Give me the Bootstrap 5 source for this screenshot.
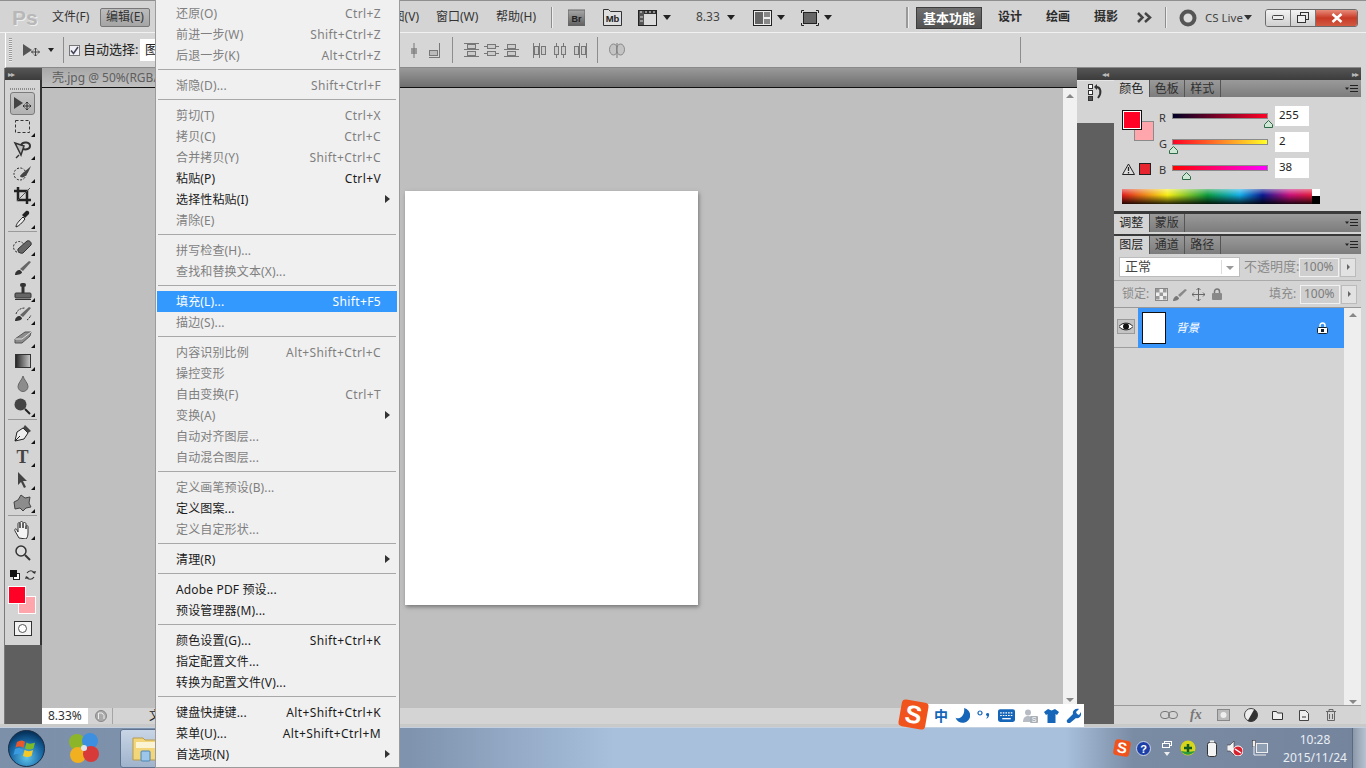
<!DOCTYPE html>
<html lang="zh-CN">
<head>
<meta charset="utf-8">
<title>Photoshop CS5</title>
<link rel="stylesheet" href="https://cdn.jsdelivr.net/npm/bootstrap@5.3.0/dist/css/bootstrap.min.css">
<script src="https://cdn.jsdelivr.net/npm/bootstrap@5.3.0/dist/js/bootstrap.bundle.min.js"></script>
<style>
html,body{margin:0;height:768px;width:1366px;overflow:hidden}
body{font:12px/1.2 "Noto Sans","Noto Sans CJK SC",sans-serif;color:#222;background:#c9c9c9;position:relative}
svg{display:block;flex:none}
.tri-d{width:0;height:0;border:4px solid transparent;border-top:5px solid #222;border-bottom:0;flex:none}
.ps-win{height:727px;display:flex;flex-direction:column;background:#d6d6d6}
/* menu bar */
.ps-menubar{height:33px;flex:none;display:flex;align-items:center;background:#d4d4d4;border-top:1px solid #8f8f8f;border-bottom:1px solid #f1f1f1;padding:2px 0 0 12px;white-space:nowrap;color:#333}
.ps-logo{width:23px;font:bold 21px "Liberation Sans",sans-serif;color:#b8b8b8;margin-right:17px;text-shadow:1px 1px 0 #eee}
.ps-mi{width:40px;flex:none}
.ps-mi-on{width:50px;margin-left:8px;height:19px;background:linear-gradient(#bcbcbc,#a5a5a5);border:1px solid #777;border-radius:2px;display:flex;align-items:center;justify-content:center;flex:none}
.ps-mi-hide{width:269px;display:flex;justify-content:flex-end;flex:none}
.ps-mi-win{width:43px;margin-left:17px;flex:none}
.ps-mi-help{width:41px;margin-left:17px;flex:none}
.ps-vsep{width:1px;background:#8d8d8d;border-right:1px solid #eee;box-sizing:content-box;height:21px;flex:none}
.ps-mright{margin-left:auto;display:flex;align-items:center;height:100%}
.ps-ws{width:66px;height:22px;background:linear-gradient(#6f6f6f,#525252);border:1px solid #3d3d3d;color:#fff;font-weight:700;text-align:center;line-height:20px;font-size:13px}
.ps-wsi{width:24px;font-weight:700;font-size:12px;color:#2b2b2b;flex:none}
.ps-winbtns{display:flex;height:18px;width:93px;border:1px solid #6b6b6b;border-radius:3px;overflow:hidden;margin-left:13px;margin-right:8px}
.ps-wb{width:26px;flex:1 1 auto;display:flex;align-items:center;justify-content:center;background:linear-gradient(#f3f3f3,#cfcfcf);border-right:1px solid #777}
.ps-wb-x{width:41px;flex:none;background:linear-gradient(#e88b7a,#c83a26 50%,#d25a42);border-right:0;color:#fff;font-weight:700}
/* options */
.ps-opts{height:35px;flex:none;margin-left:5px;margin-right:5px;display:flex;align-items:center;background:#d6d6d6;border-bottom:1px solid #8a8a8a;border-left:1px solid #fff;white-space:nowrap;position:relative}
.ps-grip{width:3px;height:24px;margin-left:3px;background:repeating-linear-gradient(#9a9a9a 0 1px,#ececec 1px 2px);flex:none}
.ps-sel{width:60px;height:22px;background:#fff;margin-left:5px;padding:3px 5px;font-size:13px;flex:none}
.ps-ck{width:11px;height:11px;border:1px solid #777;background:#eef0f6;margin-left:5px;display:flex;align-items:center;justify-content:center;flex:none}
.ps-osep{width:1px;height:26px;background:#8d8d8d;flex:none}
/* workspace */
.ps-work{flex:1 1 auto;display:flex;min-height:0;margin-left:4px;margin-right:5px;border-left:1px solid #7a7a7a;background:#5f5f5f}
.ps-toolcol{width:37px;flex:none;display:flex;flex-direction:column;background:#5f5f5f}
.ps-dkhead{height:12px;flex:none;background:linear-gradient(#555,#3c3c3c);color:#bbb;font-size:8px;line-height:11px;padding-left:3px;letter-spacing:-1px}
.ps-tools{background:#d4d4d4;border-right:2px solid #333;height:565px;display:flex;flex-direction:column;align-items:center}
.ps-tgrip{height:12px;flex:none;width:25px;background:repeating-linear-gradient(90deg,#8d8d8d 0 1px,transparent 1px 2px) center 8px/100% 2px no-repeat}
.ps-t{height:23px;width:25px;flex:none;display:flex;align-items:center;justify-content:center;position:relative}
.ps-t.sub::after{content:"";position:absolute;right:0;bottom:1px;border:2px solid transparent;border-right-color:#111;border-bottom-color:#111}
.ps-t-on{background:linear-gradient(#c4c4c4,#b2b2b2);border:1px solid #7b7b7b;border-radius:3px}
.ps-tsep{height:4px;width:29px;flex:none;position:relative}
.ps-tsep::after{content:"";display:block;height:1px;background:#9a9a9a;margin-top:1px}
.ps-swstack{width:28px;height:28px;position:relative;margin:3px 0 7px -2px;flex:none}
.ps-swfg,.ps-swbg{position:absolute;width:18px;height:18px;border:1px solid #fff}
.ps-swfg{left:0;top:0;background:#ff0226;z-index:1}
.ps-swbg{left:10px;top:10px;background:#ffa6ac}
.ps-qm{width:18px;height:15px;border:1px solid #333;background:#f3f3f3;display:flex;align-items:center;justify-content:center;flex:none}
.ps-qm i{width:9px;height:9px;border-radius:50%;border:1px solid #555;background:#fff;display:block}
/* center */
.ps-center{flex:1 1 auto;display:flex;flex-direction:column;min-width:0}
.ps-tabbar{height:20px;flex:none;background:linear-gradient(#9a9a9a,#6e6e6e);border-bottom:1px solid #111;position:relative}
.ps-tab{width:113px;height:19px;background:linear-gradient(#a9a9a9,#c0c0c0);padding:3px 0 0 10px;color:#5e5e5e;white-space:nowrap}
.ps-canvasrow{flex:1 1 auto;display:flex;min-height:0}
.ps-canvas{flex:1 1 auto;background:#bfbfbf;padding:103px 0 0 363px}
.ps-page{width:293px;height:414px;background:#fff;box-shadow:1px 2px 4px #777}
.ps-vs{width:14px;flex:none;background:#f1f1f1;display:flex;flex-direction:column;justify-content:space-between;align-items:center;padding:6px 0}
.ps-tu{width:0;height:0;border:4px solid transparent;border-bottom:4px solid #888;border-top:0}
.ps-td{width:0;height:0;border:4px solid transparent;border-top:4px solid #888;border-bottom:0}
.ps-status{height:16px;flex:none;background:#d4d4d4;display:flex;align-items:center;white-space:nowrap}
.ps-zoombox{width:46px;height:100%;background:#fff;padding-left:6px;color:#333;line-height:16px}
.ps-doctxt{margin-left:5px;border-left:1px solid #a5a5a5;height:100%;padding-left:36px;line-height:16px;color:#222}
/* dock */
.ps-dock{width:284px;flex:none;display:flex;flex-direction:column;background:#5f5f5f}
.ps-dockhead{height:12px;flex:none;background:linear-gradient(#555,#3c3c3c);color:#bbb;font-size:8px;line-height:11px;display:flex;justify-content:space-between;padding:0 3px 0 25px;letter-spacing:-1px}
.ps-dockbody{flex:1 1 auto;display:flex;min-height:0}
.ps-iconic{width:37px;flex:none}
.ps-histbtn{height:43px;background:#d4d4d4;display:flex;justify-content:center;padding-top:3px;border-top:1px solid #e6e6e6;position:relative}
.ps-panels{flex:1 1 auto;display:flex;flex-direction:column;min-width:0;background:#3a3a3a}
.ps-ptabs{display:flex;height:18px;flex:none;background:linear-gradient(#9a9a9a,#7c7c7c);align-items:stretch;position:relative}
.ps-ptab{width:35.5px;text-align:center;line-height:17px;color:#2f2f2f;border-right:1px solid #555;flex:none}
.ps-ptab-on{background:#d4d4d4;color:#222;border-right:1px solid #555}
.ps-pmenu{margin-left:auto;margin-right:3px;align-self:center}
.ps-pcolor{height:114px;flex:none;background:#d4d4d4;padding:9px 0 0 8px;margin-bottom:3px}
.ps-clcol{width:37px;height:72px;display:flex;flex-direction:column;justify-content:space-between;flex:none}
.ps-cl-stack{position:relative;height:34px;margin-top:4px}
.ps-cl-fg,.ps-cl-bg{position:absolute;width:20px;height:20px}
.ps-cl-fg{left:0;top:0;background:#ff0226;border:1px solid #111;outline:1px solid #fff;outline-offset:-2px;z-index:1}
.ps-cl-bg{left:12px;top:11px;background:#ffa6ac;border:1px solid #8a8a8a}
.ps-warn{display:flex;align-items:center;gap:4px;margin-bottom:3px}
.ps-gam{width:12px;height:12px;background:#e6252f;border:1px solid #222}
.ps-crow{height:26px;display:flex;align-items:flex-start}
.ps-clab{width:13px;padding-top:5px;color:#333;font-size:11px;flex:none}
.ps-slw{width:96px;position:relative;flex:none;margin-top:7px}
.ps-sl{height:6px;border:1px solid #8b8b8b}
.ps-sl-r{background:linear-gradient(90deg,#000226,#ff0226)}
.ps-sl-g{background:linear-gradient(90deg,#ff0026,#ffff26)}
.ps-sl-b{background:linear-gradient(90deg,#ff0200,#ff02ff)}
.ps-thumb{position:absolute;top:7px;width:9px;height:8px;margin-left:-4px}
.ps-val{width:34px;height:20px;background:#fff;margin-left:7px;padding:0 0 0 4px;line-height:17px;font-size:11.5px;color:#222;flex:none}
.ps-spec{width:198px;height:15px;margin-top:5px;display:flex;border:0}
.ps-spec-c{flex:1 1 auto;background:linear-gradient(rgba(255,255,255,.45),rgba(255,255,255,0) 40%,rgba(0,0,0,.85)),linear-gradient(90deg,#e01c1c,#f7ee12 24%,#0d9b3f 45%,#12aee8 62%,#0b1a90 74%,#c8107c 88%,#e01c3a)}
.ps-spec-e{width:8px;flex:none;background:linear-gradient(#fff 50%,#000 50%)}
.ps-strip{height:2px;background:#d4d4d4;flex:none}
.ps-player{flex:1 1 auto;display:flex;flex-direction:column;background:#d4d4d4;min-height:0}
.ps-lr1{height:27px;flex:none;display:flex;align-items:center;border-bottom:1px solid #aaa;padding-left:5px;color:#8a8a8a;white-space:nowrap}
.ps-lr2{height:27px;flex:none;display:flex;align-items:center;border-bottom:1px solid #999;padding-left:8px;color:#8a8a8a;white-space:nowrap}
.ps-blend{width:121px;height:20px;background:#fff;border:1px solid #bcbcbc;display:flex;align-items:center;padding-left:5px;color:#444;font-size:13px;position:relative;flex:none}
.ps-blend::before{content:"";position:absolute;right:17px;top:2px;bottom:2px;width:1px;background:#ddd}
.ps-blend b{position:absolute;right:5px;top:8px;border:4px solid transparent;border-top:4px solid #999;border-bottom:0}
.ps-op{width:40px;height:19px;background:#cfcfcf;border:1px solid #f1f1f1;color:#7c7c7c;padding-left:3px;line-height:16px;margin-left:3px;flex:none}
.ps-oparrow{width:16px;height:19px;background:#e2e2e2;border:1px solid #bbb;margin-left:1px;display:flex;align-items:center;justify-content:center;flex:none}
.ps-oparrow i{border:3px solid transparent;border-left:3px solid #666;border-right:0;display:block}
.ps-lmid{flex:1 1 auto;display:flex;min-height:0}
.ps-llist{flex:1 1 auto;min-width:0}
.ps-lrow{height:40px;display:flex;border-bottom:0}
.ps-eye{width:24px;flex:none;display:flex;align-items:center;justify-content:center;border-bottom:1px solid #9e9e9e;position:relative;padding-bottom:2px}
.ps-eyebox{width:18px;height:15px;background:#c4c4c4;border:1px solid #9a9a9a;display:flex;align-items:center;justify-content:center}
.ps-lsel{flex:1 1 auto;background:#3a95fb;display:flex;align-items:center;padding-left:4px;color:#fff}
.ps-lthumb{width:24px;height:32px;background:#fff;border:1px solid #111;flex:none}
.ps-lname{margin-left:10px;font-style:italic;font-size:11.5px}
.ps-lvs{width:17px;flex:none;background:#eee;display:flex;flex-direction:column;justify-content:space-between;align-items:center;padding:5px 0 1px}
.ps-lbot{height:19px;flex:none;border-top:1px solid #999;display:flex;align-items:center;background:#d4d4d4;padding-left:46px}
.ps-lbot>*{flex:none}
/* taskbar */
.ps-taskbar{height:41px;display:flex;align-items:center;background:linear-gradient(90deg,#7d90aa 0,#7f93ae 30%,#a8c0dc 45%,#a8c0dc 78%,#7a8ba4 83%,#74849c 100%);border-top:1px solid #c2d0e0;position:relative}
.ps-appbtn{width:60px;height:39px;margin-left:20px;background:linear-gradient(#c8d5e6,#9fb3cc);border:1px solid #5f7390;border-radius:3px;display:flex;align-items:center;padding-left:10px;flex:none}
.ps-tray{margin-left:auto;display:flex;align-items:center;height:100%}
.ps-clock{width:70px;color:#e9eef5;text-align:center;font-size:12px;line-height:18px;margin-left:12px;padding-top:1px}
.ps-showd{width:14px;height:100%;margin-left:2px;background:linear-gradient(90deg,#8b98aa,#b8c2d0);border-left:1px solid #5c6a80}
/* edit menu */
.ps-menu{position:absolute;left:155px;top:0;width:245px;height:768px;background:#f0f0f0;border:1px solid #9b9b9b;border-top:0;padding:2.5px 2px 0 1px;z-index:20;white-space:nowrap;letter-spacing:.15px}
.ps-mit{height:21px;display:flex;align-items:center;justify-content:space-between;padding:2px 16px 0 19px;color:#7f7f7f;position:relative}
.ps-mit>span+span{letter-spacing:.38px}
.ps-mit.en{color:#1b1b1b}
.ps-mit.cur{background:#3399ff;color:#fff}
.ps-mit.arr::after{content:"";position:absolute;right:7px;top:6px;border:4px solid transparent;border-left:5px solid #333;border-right:0}
.ps-msep{height:9px;display:flex;align-items:center;padding:0 1px}
.ps-msep::before{content:"";flex:1;height:1px;background:#a8a8a8;display:block;margin-top:-1px}
/* sogou */
.ps-sogou{position:absolute;left:905px;top:704px;width:179px;height:23px;background:#fff;z-index:10;display:flex;align-items:center;padding-left:29px;gap:7px;color:#1565b8}
.ps-slogo{position:absolute;left:-5px;top:-3px;width:27px;height:27px;background:#f0541c;border-radius:4px;transform:rotate(10deg);color:#fff;font:900 25px/26px "Liberation Sans",sans-serif;text-align:center}
.ps-szh{font-weight:700;font-size:14px;color:#1565b8;width:14px;line-height:14px}
.ps-trs{width:16px;height:16px;background:#f0541c;border-radius:3px;transform:rotate(10deg);color:#fff;font:900 15px/16px "Liberation Sans",sans-serif;text-align:center;flex:none}
</style>
</head>
<body>
<div class="ps-win">
  <div class="ps-menubar">
    <div class="ps-logo">Ps</div>
    <div class="ps-mi">文件(F)</div>
    <div class="ps-mi-on">编辑(E)</div>
    <div class="ps-mi-hide"><span>视图(V)</span></div>
    <div class="ps-mi-win">窗口(W)</div>
    <div class="ps-mi-help">帮助(H)</div>
    <div class="ps-vsep" style="margin-left:14px"></div>
    <svg style="margin-left:15px" width="17" height="17" viewBox="0 0 17 17"><defs><linearGradient id="g1" x1="0" y1="0" x2="0" y2="1"><stop offset="0" stop-color="#a8a8a8"/><stop offset="1" stop-color="#5e5e5e"/></linearGradient></defs><rect width="17" height="16" y="1" fill="url(#g1)" stroke="#666"/><text x="8.5" y="12.5" text-anchor="middle" font-size="9" font-weight="700" font-family="Liberation Sans" fill="#222">Br</text></svg>
    <svg style="margin-left:18px" width="19" height="17" viewBox="0 0 19 17"><path d="M.5 16.5V.5h5l2 2h11v14z" fill="#dedede" stroke="#333"/><text x="9.5" y="13" text-anchor="middle" font-size="9.5" font-weight="700" font-family="Liberation Sans" fill="#222">Mb</text></svg>
    <svg style="margin-left:16px" width="19" height="16" viewBox="0 0 19 16"><rect x=".5" y=".5" width="18" height="15" fill="#dcdcdc" stroke="#222"/><rect x="1" y="1" width="17" height="3" fill="#333"/><rect x="1" y="1" width="5" height="14" fill="#555"/><path d="M2 2h2M7 2h2M11 2h2M15 2h2" stroke="#eee"/><path d="M2 7h3M2 11h3" stroke="#ddd"/></svg>
    <div class="tri-d" style="margin-left:6px"></div>
    <span style="margin-left:25px;color:#444;width:21px">8.33</span>
    <div class="tri-d" style="margin-left:10px"></div>
    <svg style="margin-left:18px" width="19" height="16" viewBox="0 0 19 16"><rect x=".5" y=".5" width="18" height="15" fill="#eee" stroke="#222"/><rect x="2" y="2" width="8" height="12" fill="#666"/><rect x="11" y="2" width="6" height="5" fill="#888"/><rect x="11" y="9" width="6" height="5" fill="#888"/></svg>
    <div class="tri-d" style="margin-left:5px"></div>
    <svg style="margin-left:16px" width="18" height="16" viewBox="0 0 18 16"><rect x="2.5" y="2.5" width="13" height="11" fill="#666" stroke="#222"/><path d="M.5 3V.5H3M15 .5h2.500V3M.5 13v2.500H3M15 15.500h2.500V13" fill="none" stroke="#222"/></svg>
    <div class="tri-d" style="margin-left:5px"></div>
    <div class="ps-mright">
      <div class="ps-vsep" style="width:2px;background:#999;margin-right:7px"></div>
      <div class="ps-ws">基本功能</div>
      <div class="ps-wsi" style="margin-left:16px">设计</div>
      <div class="ps-wsi" style="margin-left:24px">绘画</div>
      <div class="ps-wsi" style="margin-left:24px">摄影</div>
      <svg style="margin-left:19px" width="15" height="11" viewBox="0 0 15 11"><path d="M1 1l4.500 4.500L1 10M8 1l5 4.500L8 10" fill="none" stroke="#444" stroke-width="2.500"/></svg>
      <div class="ps-vsep" style="margin-left:13px"></div>
      <svg style="margin-left:12px" width="18" height="18" viewBox="0 0 18 18"><circle cx="9" cy="9" r="6.500" fill="#dcdcdc" stroke="#555" stroke-width="4"/></svg>
      <span class="ms-2" style="color:#444;width:37px;font-size:11.5px">CS Live</span>
      <div class="tri-d" style="border-top-color:#333;margin-left:2px"></div>
      <div class="ps-winbtns">
        <div class="ps-wb"><svg width="12" height="6" viewBox="0 0 12 6"><rect x=".5" y=".5" width="11" height="4" rx="1" fill="#eee" stroke="#444"/></svg></div>
        <div class="ps-wb"><svg width="12" height="11" viewBox="0 0 12 11"><rect x="3.500" y=".5" width="8" height="7" fill="none" stroke="#333"/><rect x=".5" y="3.500" width="8" height="7" fill="#eee" stroke="#333"/></svg></div>
        <div class="ps-wb ps-wb-x"><svg width="12" height="10" viewBox="0 0 12 10"><path d="M1.500 1l9 8M10.500 1l-9 8" stroke="#fff" stroke-width="2.500"/></svg></div>
      </div>
    </div>
  </div>

  <div class="ps-opts">
    <div class="ps-grip"></div>
    <svg style="margin-left:10px" width="18" height="13" viewBox="0 0 18 13"><path d="M1 0l9 6-9 6z" fill="#555"/><path d="M13.500 4v8M9.500 8h8M12 5.500l1.500-1.500 1.500 1.500M12 10.500l1.500 1.500 1.500-1.500M11 6.500L9.500 8l1.500 1.500M16 6.500L17.500 8 16 9.500" fill="none" stroke="#444"/></svg>
    <div class="tri-d ms-2" style="border-width:3px;border-top-width:4px"></div>
    <div class="ps-osep" style="margin-left:9px"></div>
    <div class="ps-ck"><svg width="9" height="9" viewBox="0 0 9 9"><path d="M1 4.500l2.500 3L8 1" fill="none" stroke="#445" stroke-width="1.500"/></svg></div>
    <span style="margin-left:3px;font-size:13px;width:52px">自动选择:</span>
    <div class="ps-sel">图层</div>
    <div style="width:209px;flex:none"></div>
    <svg width="11" height="15" viewBox="0 0 11 15"><rect x="2" y="5" width="6" height="6" fill="#999"/><path d="M5 0v15" stroke="#777"/></svg>
    <svg style="margin-left:9px" width="12" height="15" viewBox="0 0 12 15"><rect x=".5" y="7.500" width="8" height="5" fill="#bbb" stroke="#777"/><path d="M10.500 0v15M0 14.500h11" stroke="#777"/></svg>
    <div class="ps-osep" style="margin-left:11px"></div>
    <svg style="margin-left:11px" width="15" height="14" viewBox="0 0 15 14"><path d="M0 .5h15M0 6.500h15M0 13.500h15" stroke="#777"/><rect x="3.500" y="1.500" width="8" height="4" fill="#ccc" stroke="#777"/><rect x="3.500" y="8.500" width="8" height="4" fill="#ccc" stroke="#777"/></svg>
    <svg style="margin-left:5px" width="15" height="14" viewBox="0 0 15 14"><path d="M0 3.500h15M0 10.500h15" stroke="#777"/><rect x="3.500" y="1.500" width="8" height="4" fill="#ccc" stroke="#777"/><rect x="3.500" y="8.500" width="8" height="4" fill="#ccc" stroke="#777"/></svg>
    <svg style="margin-left:5px" width="15" height="14" viewBox="0 0 15 14"><path d="M0 6.500h15M0 13.500h15" stroke="#777"/><rect x="3.500" y="1.500" width="8" height="4" fill="#ccc" stroke="#777"/><rect x="3.500" y="8.500" width="8" height="4" fill="#ccc" stroke="#777"/></svg>
    <svg style="margin-left:14px" width="14" height="15" viewBox="0 0 14 15"><path d="M.5 0v15M6.500 0v15" stroke="#777"/><rect x="1.500" y="3.500" width="4" height="8" fill="#ccc" stroke="#777"/><rect x="8.500" y="3.500" width="4" height="8" fill="#ccc" stroke="#777"/></svg>
    <svg style="margin-left:6px" width="14" height="15" viewBox="0 0 14 15"><path d="M3.500 0v15M10.500 0v15" stroke="#777"/><rect x="1.500" y="3.500" width="4" height="8" fill="#ccc" stroke="#777"/><rect x="8.500" y="3.500" width="4" height="8" fill="#ccc" stroke="#777"/></svg>
    <svg style="margin-left:6px" width="14" height="15" viewBox="0 0 14 15"><path d="M6.500 0v15M13.500 0v15" stroke="#777"/><rect x="1.500" y="3.500" width="4" height="8" fill="#ccc" stroke="#777"/><rect x="8.500" y="3.500" width="4" height="8" fill="#ccc" stroke="#777"/></svg>
    <div class="ps-osep" style="margin-left:10px"></div>
    <svg style="margin-left:11px" width="16" height="15" viewBox="0 0 16 15"><ellipse cx="4.500" cy="6.500" rx="4" ry="5.500" fill="#c4c4c4" stroke="#888"/><ellipse cx="11.500" cy="6.500" rx="4" ry="5.500" fill="#c4c4c4" stroke="#888"/><path d="M8 0v15" stroke="#777"/></svg>
    <div class="ps-osep" style="margin-left:395px"></div>
  </div>

  <div class="ps-work">
    <div class="ps-toolcol">
      <div class="ps-dkhead">▸▸</div>
      <div class="ps-tools">
        <div class="ps-tgrip"></div>
        <div class="ps-t ps-t-on"><svg width="19" height="14" viewBox="0 0 19 14"><path d="M1 0l9 6-9 6z" fill="#444"/><path d="M14 5v8M10 9h8M12.500 6.500L14 5l1.500 1.500M12.500 11.500L14 13l1.500-1.500M11.500 7.500L10 9l1.500 1.500M16.500 7.500L18 9l-1.500 1.500" fill="none" stroke="#333"/></svg></div>
        <div class="ps-t sub"><svg width="15" height="13" viewBox="0 0 15 13"><rect x=".5" y=".5" width="14" height="12" fill="none" stroke="#333" stroke-dasharray="3 2"/></svg></div>
        <div class="ps-t sub"><svg width="19" height="19" viewBox="0 0 19 19"><path d="M2 3l9 3-3 9z" fill="#bbb" stroke="#333" stroke-width="1.500"/><path d="M8 5c2-4 9-3 9 1 0 3-4 4-7 3" fill="none" stroke="#333" stroke-width="2"/><path d="M3 18l3-3" stroke="#333" stroke-width="1.500"/></svg></div>
        <div class="ps-t sub"><svg width="19" height="16" viewBox="0 0 19 16"><circle cx="7" cy="9" r="6" fill="none" stroke="#222" stroke-dasharray="2 1.500"/><path d="M7 11c2-3 6-5 11-10-2 5-4 9-7 11-2 1-4 0-4-1z" fill="#444"/></svg></div>
        <div class="ps-t sub"><svg width="17" height="17" viewBox="0 0 17 17"><path d="M4 0v13h13M0 4h13v13" fill="none" stroke="#222" stroke-width="2.500"/><path d="M3 14L16 1" stroke="#555"/></svg></div>
        <div class="ps-t sub"><svg width="15" height="18" viewBox="0 0 15 18"><path d="M1 17c0-3 3-6 7-10l2 2c-3 4-6 7-9 8z" fill="#eee" stroke="#222"/><path d="M7 5l3-3 1-1c2-1 4 1 3 3l-1 1-3 3z" fill="#222"/></svg></div>
        <div class="ps-tsep"></div>
        <div class="ps-t sub"><svg width="20" height="18" viewBox="0 0 20 18"><circle cx="6" cy="10" r="5.500" fill="none" stroke="#222" stroke-dasharray="2 1.500"/><path d="M5 12l9-8c2-1 5 1 4 4l-8 8c-2 1-6-1-5-4z" fill="#666" stroke="#333"/></svg></div>
        <div class="ps-t sub"><svg width="18" height="15" viewBox="0 0 18 15"><path d="M1 14c0-3 2-5 5-5l2 2c0 2-3 3-7 3z" fill="#333"/><path d="M6 8l9-8 2 1-8 9z" fill="#666"/></svg></div>
        <div class="ps-t sub"><svg width="18" height="17" viewBox="0 0 18 17"><rect x="6" y="0" width="6" height="4" rx="2" fill="#333"/><rect x="7.500" y="4" width="3" height="6" fill="#333"/><rect x="1" y="10" width="16" height="5" rx="1" fill="#666" stroke="#333"/><path d="M1 16.500h16" stroke="#333"/></svg></div>
        <div class="ps-t sub"><svg width="18" height="15" viewBox="0 0 18 15"><path d="M1 14c0-3 2-5 5-5l2 2c0 2-3 3-7 3z" fill="#333"/><path d="M6 8l9-8 2 1-8 9z" fill="#666"/><path d="M2 7C3 3 7 1 11 1M13 13c2-1 3-3 4-5" fill="none" stroke="#333" stroke-dasharray="2 1"/></svg></div>
        <div class="ps-t sub"><svg width="18" height="13" viewBox="0 0 18 13"><path d="M1 8l10-7h6l-1 4-8 7H1z" fill="#8c8c8c" stroke="#555"/><path d="M1 8h7l9-7" fill="none" stroke="#ddd"/></svg></div>
        <div class="ps-t sub"><svg width="16" height="14" viewBox="0 0 16 14"><defs><linearGradient id="g2"><stop offset="0" stop-color="#222"/><stop offset="1" stop-color="#ccc"/></linearGradient></defs><rect x=".5" y=".5" width="15" height="13" fill="url(#g2)" stroke="#333"/></svg></div>
        <div class="ps-t sub"><svg width="12" height="16" viewBox="0 0 12 16"><path d="M6 0C5 4 1 7 1 10.500a5 5 0 0 0 10 0C11 7 7 4 6 0z" fill="#8c8c8c" stroke="#666"/></svg></div>
        <div class="ps-t sub"><svg width="17" height="17" viewBox="0 0 17 17"><circle cx="6.500" cy="6.500" r="6" fill="#444"/><path d="M11 11l5 5" stroke="#222" stroke-width="2"/></svg></div>
        <div class="ps-tsep"></div>
        <div class="ps-t sub"><svg width="17" height="17" viewBox="0 0 17 17"><path d="M1 16l2-9 6-4 5 5-4 6z" fill="#eee" stroke="#222"/><path d="M9 3l2-3 6 6-3 2z" fill="#444"/><path d="M1 16l5-5" stroke="#222"/></svg></div>
        <div class="ps-t sub"><span style="font:700 18px/1 'Liberation Serif',serif;color:#444">T</span></div>
        <div class="ps-t sub"><svg width="11" height="16" viewBox="0 0 11 16"><path d="M1 0l9 9H6l3 6-2 1-3-6-3 3z" fill="#444"/></svg></div>
        <div class="ps-t sub"><svg width="19" height="17" viewBox="0 0 19 17"><path d="M1 8l4-2 3-5 4 3 5-1-1 6 2 4-5 1-3 3-3-3-5 1z" fill="#8c8c8c" stroke="#444"/></svg></div>
        <div class="ps-tsep"></div>
        <div class="ps-t sub"><svg width="18" height="18" viewBox="0 0 18 18"><path d="M5 17L1 10c-1-2 1-3 2-1l1 2V3c0-2 2-2 2 0v4-5c0-2 3-2 3 0v5-4c0-2 3-2 3 0v5-2c0-2 2-2 2 0v6c0 3-1 5-2 6z" fill="#f4f4f4" stroke="#333"/></svg></div>
        <div class="ps-t"><svg width="16" height="16" viewBox="0 0 16 16"><circle cx="6" cy="6" r="5" fill="#ddd" stroke="#333" stroke-width="1.500"/><path d="M10 10l5 5" stroke="#333" stroke-width="2"/></svg></div>
        <div class="d-flex align-items-center justify-content-between" style="width:26px;height:19px;flex:none;padding-top:3px">
          <svg width="10" height="10" viewBox="0 0 10 10"><rect x="3.500" y="3.500" width="6" height="6" fill="#fff" stroke="#222"/><rect width="7" height="7" fill="#111"/></svg>
          <svg width="11" height="10" viewBox="0 0 11 10"><path d="M2 3c2-3 6-3 7 0M9 7c-2 3-6 3-7 0" fill="none" stroke="#333" stroke-width="1.200"/><path d="M7 2l3 2 1-3zM4 8L1 6 0 9z" fill="#333"/></svg>
        </div>
        <div class="ps-swstack"><div class="ps-swfg"></div><div class="ps-swbg"></div></div>
        <div class="ps-qm"><i></i></div>
      </div>
    </div>

    <div class="ps-center">
      <div class="ps-tabbar"><div class="ps-tab">壳.jpg @ 50%(RGB/</div></div>
      <div class="ps-canvasrow">
        <div class="ps-canvas"><div class="ps-page"></div></div>
        <div class="ps-vs"><div class="ps-tu"></div><div class="ps-td"></div></div>
      </div>
      <div class="ps-status">
        <div class="ps-zoombox">8.33%</div>
        <svg style="margin-left:7px" width="12" height="12" viewBox="0 0 12 12"><circle cx="6" cy="6" r="5.500" fill="#aaa" stroke="#888"/><path d="M3.500 9V3H7l2 2.500V9" fill="none" stroke="#eee"/></svg>
        <div class="ps-doctxt">文</div>
      </div>
    </div>

    <div class="ps-dock">
      <div class="ps-dockhead"><span>◂◂</span><span>▸▸</span></div>
      <div class="ps-dockbody">
        <div class="ps-iconic">
          <div class="ps-histbtn"><svg width="16" height="18" viewBox="0 0 16 18"><rect x=".5" y=".5" width="4" height="4" fill="#fff" stroke="#333"/><rect x=".5" y="6.500" width="4" height="4" fill="#fff" stroke="#333"/><rect x=".5" y="12.500" width="4" height="4" fill="#555" stroke="#333"/><path d="M7 3c6-1 7 6 3 11" fill="none" stroke="#333" stroke-width="2"/><path d="M9 0L6 3l3 3z" fill="#333"/></svg></div>
        </div>
        <div class="ps-panels">
          <div class="ps-ptabs" style="height:17px">
            <div class="ps-ptab ps-ptab-on">颜色</div><div class="ps-ptab">色板</div><div class="ps-ptab">样式</div>
            <svg class="ps-pmenu" width="13" height="8" viewBox="0 0 13 8"><path d="M5 .5h8M5 3.500h8M5 6.500h8" stroke="#222"/><path d="M0 2.500h4L2 5z" fill="#222"/></svg>
          </div>
          <div class="ps-pcolor">
            <div class="d-flex">
              <div class="ps-clcol">
                <div class="ps-cl-stack"><div class="ps-cl-fg"></div><div class="ps-cl-bg"></div></div>
                <div class="ps-warn">
                  <svg width="13" height="12" viewBox="0 0 13 12"><path d="M6.500 1L12.500 11.500H.5z" fill="#ddd" stroke="#222"/><path d="M6.500 4v4M6.500 9v1.500" stroke="#222" stroke-width="1.300"/></svg>
                  <div class="ps-gam"></div>
                </div>
              </div>
              <div>
                <div class="ps-crow"><div class="ps-clab">R</div><div class="ps-slw"><div class="ps-sl ps-sl-r"></div><svg class="ps-thumb" style="left:96px" viewBox="0 0 9 8"><path d="M4.500.5l4 4v3h-8v-3z" fill="#cfe8d6" stroke="#2e6a48"/></svg></div><div class="ps-val">255</div></div>
                <div class="ps-crow"><div class="ps-clab">G</div><div class="ps-slw"><div class="ps-sl ps-sl-g"></div><svg class="ps-thumb" style="left:1px" viewBox="0 0 9 8"><path d="M4.500.5l4 4v3h-8v-3z" fill="#cfe8d6" stroke="#2e6a48"/></svg></div><div class="ps-val">2</div></div>
                <div class="ps-crow"><div class="ps-clab">B</div><div class="ps-slw"><div class="ps-sl ps-sl-b"></div><svg class="ps-thumb" style="left:14px" viewBox="0 0 9 8"><path d="M4.500.5l4 4v3h-8v-3z" fill="#cfe8d6" stroke="#2e6a48"/></svg></div><div class="ps-val">38</div></div>
              </div>
            </div>
            <div class="ps-spec"><div class="ps-spec-c"></div><div class="ps-spec-e"></div></div>
          </div>
          <div class="ps-ptabs">
            <div class="ps-ptab ps-ptab-on">调整</div><div class="ps-ptab">蒙版</div>
            <svg class="ps-pmenu" width="13" height="8" viewBox="0 0 13 8"><path d="M5 .5h8M5 3.500h8M5 6.500h8" stroke="#222"/><path d="M0 2.500h4L2 5z" fill="#222"/></svg>
          </div>
          <div class="ps-strip"></div>
          <div style="height:2px;flex:none"></div>
          <div class="ps-ptabs">
            <div class="ps-ptab ps-ptab-on">图层</div><div class="ps-ptab">通道</div><div class="ps-ptab">路径</div>
            <svg class="ps-pmenu" width="13" height="8" viewBox="0 0 13 8"><path d="M5 .5h8M5 3.500h8M5 6.500h8" stroke="#222"/><path d="M0 2.500h4L2 5z" fill="#222"/></svg>
          </div>
          <div class="ps-player">
            <div class="ps-lr1">
              <div class="ps-blend">正常<b></b></div>
              <span style="margin-left:4px;width:52px;font-size:13px;flex:none">不透明度:</span>
              <div class="ps-op">100%</div>
              <div class="ps-oparrow"><i></i></div>
            </div>
            <div class="ps-lr2">
              <span style="width:26px;flex:none;margin-right:7px">锁定:</span>
              <svg width="13" height="13" viewBox="0 0 13 13"><rect x=".5" y=".5" width="12" height="12" fill="#eee" stroke="#888"/><path d="M1 1h3.500v3.500H1zM8 1h3.500v3.500H8zM4.500 4.500H8V8H4.500zM1 8h3.500v3.500H1zM8 8h3.500v3.500H8z" fill="#999"/></svg>
              <svg style="margin-left:5px" width="14" height="13" viewBox="0 0 14 13"><path d="M0 13c0-3 2-5 4-5l2 2c0 2-3 3-6 3z" fill="#777"/><path d="M5 7l7-6 2 1-7 7z" fill="#888"/></svg>
              <svg style="margin-left:5px" width="13" height="13" viewBox="0 0 13 13"><path d="M6.500 0v13M0 6.500h13M4.500 2l2-2 2 2M4.500 11l2 2 2-2M2 4.500l-2 2 2 2M11 4.500l2 2-2 2" fill="none" stroke="#666"/></svg>
              <svg style="margin-left:7px" width="10" height="12" viewBox="0 0 10 12"><path d="M2.500 5V3.500a2.500 2.500 0 0 1 5 0V5" fill="none" stroke="#777" stroke-width="1.500"/><rect y="5" width="10" height="7" rx="1" fill="#888"/></svg>
              <span style="margin-left:47px;width:27px;flex:none">填充:</span>
              <div class="ps-op" style="margin-left:4px">100%</div>
              <div class="ps-oparrow"><i></i></div>
            </div>
            <div class="ps-lmid">
              <div class="ps-llist">
                <div class="ps-lrow">
                  <div class="ps-eye"><div class="ps-eyebox"><svg width="14" height="9" viewBox="0 0 14 9"><path d="M0 4.500C3 0 11 0 14 4.500 11 9 3 9 0 4.500z" fill="#fff" stroke="#222"/><circle cx="7" cy="4.500" r="3" fill="#111"/></svg></div></div>
                  <div class="ps-lsel">
                    <div class="ps-lthumb"></div>
                    <span class="ps-lname">背景</span>
                    <svg class="ms-auto" style="margin-right:16px" width="11" height="12" viewBox="0 0 11 12"><path d="M3 6V3.500a2.500 2.500 0 0 1 5 0V6" fill="none" stroke="#fff" stroke-width="1.500"/><rect x=".5" y="5.500" width="10" height="6" rx="1" fill="#fff" stroke="#123"/><rect x="4" y="7" width="3" height="3" fill="#123"/></svg>
                  </div>
                </div>
              </div>
              <div class="ps-lvs"><div class="ps-tu"></div><div class="ps-td"></div></div>
            </div>
            <div class="ps-lbot">
              <svg width="18" height="8" viewBox="0 0 18 8"><rect x=".5" y=".5" width="9" height="7" rx="3.500" fill="none" stroke="#777"/><rect x="8.500" y=".5" width="9" height="7" rx="3.500" fill="none" stroke="#777"/></svg>
              <span style="margin-left:12px;width:15px;font:italic 700 14px 'Liberation Serif',serif;color:#777">fx</span>
              <svg style="margin-left:12px" width="13" height="12" viewBox="0 0 13 12"><rect x=".5" y=".5" width="12" height="11" fill="#bbb" stroke="#888"/><circle cx="6.500" cy="6" r="3" fill="#eee"/></svg>
              <svg style="margin-left:14px" width="14" height="14" viewBox="0 0 14 14"><circle cx="7" cy="7" r="6.500" fill="#eee" stroke="#444"/><path d="M7 .5a6.500 6.500 0 0 1 0 13z" fill="#333" transform="rotate(30 7 7)"/></svg>
              <svg style="margin-left:14px" width="11" height="9" viewBox="0 0 11 9"><path d="M.5.5h4l1 1.500h5v6.500H.5z" fill="#eee" stroke="#333"/></svg>
              <svg style="margin-left:16px" width="10" height="11" viewBox="0 0 10 11"><path d="M.5.5h6l3 3v7h-9z" fill="#eee" stroke="#444"/><path d="M3 7h4" stroke="#333"/></svg>
              <svg style="margin-left:17px" width="10" height="12" viewBox="0 0 10 12"><path d="M0 2.500h10M3 2.500V.5h4v2M1.500 3v8.500h7V3M3.500 5v5M6.500 5v5" fill="none" stroke="#666"/></svg>
            </div>
          </div>
        </div>
      </div>
    </div>
  </div>
  <div style="height:3px;flex:none;background:#c9c9c9"></div>
</div>

<div class="ps-taskbar">
  <svg style="margin-left:8px" width="37" height="37" viewBox="0 0 37 37"><defs><radialGradient id="orb" cx=".5" cy=".75" r=".7"><stop offset="0" stop-color="#5fc3ea"/><stop offset=".6" stop-color="#1a6ba8"/><stop offset="1" stop-color="#06345e"/></radialGradient></defs><circle cx="18.500" cy="18.500" r="18" fill="url(#orb)" stroke="#1c2d44"/><path d="M9 12c3-2 6-2 8 0l-1.500 6c-2-1.500-5-2-8-.5z" fill="#e8582c"/><path d="M18.500 12.500c3 2 6 1 8.500 0l-1.500 6c-3 1.500-6 1-8.500 0z" fill="#7dba2a"/><path d="M7 19c3-1.500 5-1 8 .5L13.500 25c-2-1.500-5-1.500-8 0z" fill="#3b9be0"/><path d="M16.500 20c3 1.500 6 1.500 8.500 0l-1.500 6c-3 1.500-6 1-8.500 0z" fill="#f3c92a"/></svg>
  <svg style="margin-left:23px" width="32" height="32" viewBox="0 0 32 32"><circle cx="9" cy="10" r="8" fill="#8cb52a"/><circle cx="22" cy="9" r="8" fill="#3d8fe0"/><circle cx="10" cy="23" r="8" fill="#f0b020"/><circle cx="23" cy="22" r="8" fill="#d83a3a"/><circle cx="16" cy="16" r="3" fill="#dfe6ee"/></svg>
  <div class="ps-appbtn"><svg width="28" height="28" viewBox="0 0 28 28"><path d="M2 4h10l2 2h12v20H2z" fill="#f3d67a" stroke="#b79a4a"/><rect x="5" y="8" width="20" height="6" fill="#fbf4d4"/><rect x="10" y="17" width="9" height="10" rx="1" fill="#9cc6ea" stroke="#4c84b4"/></svg></div>
  <div class="ps-tray">
    <div class="ps-trs">S</div>
    <svg style="margin-left:6px" width="15" height="15" viewBox="0 0 15 15"><circle cx="7.500" cy="7.500" r="7" fill="#1d3fa8" stroke="#cdd6e6"/><text x="7.500" y="11.500" text-anchor="middle" font-size="11" font-weight="700" font-family="Liberation Sans" fill="#fff">?</text></svg>
    <div style="margin-left:11px;width:10px;flex:none" class="d-flex flex-column align-items-center gap-1">
      <svg width="10" height="7" viewBox="0 0 10 7"><rect x="2.500" y=".5" width="7" height="4" fill="none" stroke="#fff"/><rect x=".5" y="2.500" width="7" height="4" fill="#74849c" stroke="#fff"/></svg>
      <div style="border:3px solid transparent;border-top:4px solid #eee;border-bottom:0"></div>
    </div>
    <svg style="margin-left:8px" width="16" height="16" viewBox="0 0 16 16"><circle cx="8" cy="8" r="7.500" fill="#d6d61c"/><path d="M1 11c4 5 10 5 14 0-4 1-10 1-14 0z" fill="#2a9a3c"/><path d="M8 4v8M4 8h8" stroke="#135a1e" stroke-width="2.500"/></svg>
    <svg style="margin-left:11px" width="10" height="17" viewBox="0 0 10 17"><rect x=".5" y="2.500" width="9" height="14" rx="2" fill="#f3f3f3" stroke="#333"/><rect x="3" y=".5" width="4" height="2" fill="#eee"/></svg>
    <svg style="margin-left:10px" width="16" height="16" viewBox="0 0 16 16"><path d="M0 5h3l4-4v14l-4-4H0z" fill="#f3f3f3" stroke="#333" stroke-width=".6"/><circle cx="11" cy="11" r="5" fill="#d8212f" stroke="#fff"/><path d="M8 9l6 4" stroke="#fff" stroke-width="1.500"/></svg>
    <svg style="margin-left:9px" width="16" height="16" viewBox="0 0 16 16"><rect x="4.500" y="3.500" width="11" height="9" fill="#8fa0b4" stroke="#eee"/><rect x=".5" y=".5" width="3" height="6" fill="#eee" stroke="#333" stroke-width=".5"/><path d="M2 6v9h12" fill="none" stroke="#eee"/></svg>
    <div class="ps-clock">10:28<br>2015/11/24</div>
    <div class="ps-showd"></div>
  </div>
</div>

<div class="ps-sogou">
  <div class="ps-slogo">S</div>
  <div class="ps-szh">中</div>
  <svg width="15" height="15" viewBox="0 0 13 14"><path d="M8 0a7 7 0 1 1-8 9c4 2 9-2 8-9z" fill="#1565b8"/></svg>
  <svg width="14" height="12" viewBox="0 0 13 12"><circle cx="2.500" cy="3" r="2" fill="none" stroke="#1565b8" stroke-width="1.200"/><path d="M10 3c2 0 2 2 1 4l-2 2c0-2 1-2 1-3-2 0-2-3 0-3z" fill="#1565b8"/></svg>
  <svg width="17" height="13" viewBox="0 0 16 12"><rect width="16" height="12" rx="2" fill="#1565b8"/><path d="M2 3.500h12M2 6h12" stroke="#fff" stroke-dasharray="1.500 1"/><path d="M4 9h8" stroke="#fff" stroke-width="1.200"/></svg>
  <svg style="margin-left:1px" width="15" height="14" viewBox="0 0 15 14"><circle cx="5" cy="3.500" r="3" fill="#b7bcc4"/><path d="M0 13c0-4 2-6 5-6s4 2 4 6z" fill="#b7bcc4"/><rect x="7" y="7" width="8" height="7" rx="1" fill="#aab0b8"/><text x="11" y="13" text-anchor="middle" font-size="7" font-family="Liberation Sans" fill="#fff">S</text></svg>
  <svg style="margin-left:-1px" width="15" height="14" viewBox="0 0 15 14"><path d="M4 0l3.500 1.500L11 0l4 3-2 3-1.500-1v9h-8V5L2 6 0 3z" fill="#1565b8"/></svg>
  <svg width="15" height="15" viewBox="0 0 15 15"><path d="M1 12l6-6c-1-3 2-6 6-5l-3 3 1 2 2 1 2-3c1 4-2 7-5 6l-6 5c-2 1-4-1-3-3z" fill="#1565b8"/></svg>
</div>

<div class="ps-menu">
  <div class="ps-mit"><span>还原(O)</span><span>Ctrl+Z</span></div>
  <div class="ps-mit"><span>前进一步(W)</span><span>Shift+Ctrl+Z</span></div>
  <div class="ps-mit"><span>后退一步(K)</span><span>Alt+Ctrl+Z</span></div>
  <div class="ps-msep"></div>
  <div class="ps-mit"><span>渐隐(D)...</span><span>Shift+Ctrl+F</span></div>
  <div class="ps-msep"></div>
  <div class="ps-mit"><span>剪切(T)</span><span>Ctrl+X</span></div>
  <div class="ps-mit"><span>拷贝(C)</span><span>Ctrl+C</span></div>
  <div class="ps-mit"><span>合并拷贝(Y)</span><span>Shift+Ctrl+C</span></div>
  <div class="ps-mit en"><span>粘贴(P)</span><span>Ctrl+V</span></div>
  <div class="ps-mit en arr"><span>选择性粘贴(I)</span></div>
  <div class="ps-mit"><span>清除(E)</span></div>
  <div class="ps-msep"></div>
  <div class="ps-mit"><span>拼写检查(H)...</span></div>
  <div class="ps-mit"><span>查找和替换文本(X)...</span></div>
  <div class="ps-msep"></div>
  <div class="ps-mit cur"><span>填充(L)...</span><span>Shift+F5</span></div>
  <div class="ps-mit"><span>描边(S)...</span></div>
  <div class="ps-msep"></div>
  <div class="ps-mit"><span>内容识别比例</span><span>Alt+Shift+Ctrl+C</span></div>
  <div class="ps-mit"><span>操控变形</span></div>
  <div class="ps-mit"><span>自由变换(F)</span><span>Ctrl+T</span></div>
  <div class="ps-mit arr"><span>变换(A)</span></div>
  <div class="ps-mit"><span>自动对齐图层...</span></div>
  <div class="ps-mit"><span>自动混合图层...</span></div>
  <div class="ps-msep"></div>
  <div class="ps-mit"><span>定义画笔预设(B)...</span></div>
  <div class="ps-mit en"><span>定义图案...</span></div>
  <div class="ps-mit"><span>定义自定形状...</span></div>
  <div class="ps-msep"></div>
  <div class="ps-mit en arr"><span>清理(R)</span></div>
  <div class="ps-msep"></div>
  <div class="ps-mit en"><span>Adobe PDF 预设...</span></div>
  <div class="ps-mit en"><span>预设管理器(M)...</span></div>
  <div class="ps-msep"></div>
  <div class="ps-mit en"><span>颜色设置(G)...</span><span>Shift+Ctrl+K</span></div>
  <div class="ps-mit en"><span>指定配置文件...</span></div>
  <div class="ps-mit en"><span>转换为配置文件(V)...</span></div>
  <div class="ps-msep"></div>
  <div class="ps-mit en"><span>键盘快捷键...</span><span>Alt+Shift+Ctrl+K</span></div>
  <div class="ps-mit en"><span>菜单(U)...</span><span>Alt+Shift+Ctrl+M</span></div>
  <div class="ps-mit en arr"><span>首选项(N)</span></div>
</div>
</body>
</html>
